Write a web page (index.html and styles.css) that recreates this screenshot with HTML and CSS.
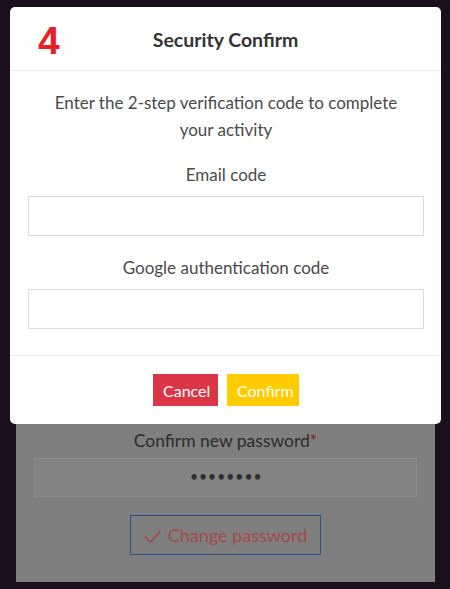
FILE: index.html
```html
<!DOCTYPE html>
<html>
<head>
<meta charset="utf-8">
<link rel="stylesheet" href="styles.css">
</head>
<body>
<div class="page">
  <div class="card">
    <div class="card-label">Confirm new password<span class="req">*</span></div>
    <div class="card-input">••••••••</div>
    <div class="card-btn">
      <svg class="check" width="18" height="16" viewBox="0 0 18 16"><path d="M1 8.5 L6.5 14 L16.5 3" fill="none" stroke="#a34a47" stroke-width="1.6"/></svg>
      <span>Change password</span>
    </div>
  </div>
</div>

<div class="modal">
  <div class="modal-header">
    <span class="step">4</span>
    <h2 class="modal-title">Security Confirm</h2>
  </div>
  <div class="modal-body">
    <p class="intro">Enter the 2-step verification code to complete your activity</p>
    <label class="field-label">Email code</label>
    <div class="field-input"></div>
    <label class="field-label">Google authentication code</label>
    <div class="field-input"></div>
  </div>
  <div class="modal-footer">
    <button class="btn btn-cancel">Cancel</button>
    <button class="btn btn-confirm">Confirm</button>
  </div>
</div>
</body>
</html>
```

FILE: styles.css
```css
html, body {
  margin: 0;
  padding: 0;
}
body {
  background: #1a0e1f;
  width: 450px;
  height: 589px;
  overflow: hidden;
  position: relative;
  font-family: Lato, "Open Sans", sans-serif;
}
.page {
  padding: 120px 15px 0 16px;
}
.card {
  background: #7f7f7f;
  height: 462px;
  display: flex;
  flex-direction: column;
  align-items: center;
  justify-content: flex-end;
  padding: 0 18px 27px;
  box-sizing: border-box;
}
.card-label {
  font-size: 17.5px;
  color: #2c2c2c;
  line-height: 24px;
}
.req {
  color: #8a1c22;
}
.card-input {
  margin-top: 5px;
  width: 100%;
  height: 39px;
  box-sizing: border-box;
  background: #838383;
  border: 1px solid #8c8c8c;
  display: flex;
  align-items: center;
  justify-content: center;
  color: #2e2e2e;
  font-size: 15px;
  font-weight: bold;
  letter-spacing: -0.5px;
  font-family: "DejaVu Sans", sans-serif;
}
.card-btn {
  margin-top: 18px;
  width: 191px;
  height: 40px;
  box-sizing: border-box;
  border: 1.5px solid #2c4f8a;
  display: flex;
  align-items: center;
  justify-content: center;
  gap: 6px;
  color: #a34a47;
  font-size: 18px;
}
.check {
  margin-top: 1px;
}
.modal {
  position: absolute;
  left: 10px;
  top: 7px;
  width: 431px;
  height: 417px;
  background: #fff;
  border-radius: 5px;
  display: flex;
  flex-direction: column;
}
.modal-header {
  height: 63px;
  border-bottom: 1px solid #ececec;
  display: flex;
  align-items: center;
  justify-content: center;
  position: relative;
}
.step {
  position: absolute;
  left: 28px;
  top: 12px;
  font-family: "Liberation Sans", Arial, sans-serif;
  font-weight: bold;
  font-size: 39px;
  color: #e8202a;
}
.modal-title {
  margin: 0;
  font-size: 19.5px;
  font-weight: 700;
  color: #333;
  padding-top: 1px;
}
.modal-body {
  padding: 18px 17px 26px 18px;
  display: flex;
  flex-direction: column;
  align-items: center;
  border-bottom: 1px solid #ececec;
}
.intro {
  margin: 0 20px;
  text-align: center;
  font-size: 17px;
  line-height: 27px;
  color: #4a4a4a;
}
.field-label {
  margin-top: 18px;
  font-size: 17px;
  line-height: 27px;
  color: #4a4a4a;
}
.field-input {
  margin-top: 8px;
  width: 100%;
  height: 40px;
  box-sizing: border-box;
  border: 1px solid #dcdcdc;
}
.modal-body .field-label:nth-of-type(2) {
  margin-top: 18px;
}
.modal-footer {
  flex: 1;
  display: flex;
  align-items: center;
  justify-content: center;
  gap: 8px;
}
.btn {
  border: none;
  height: 32px;
  padding: 0 10px;
  color: #fff;
  font-family: Lato, sans-serif;
  font-size: 16px;
  margin-left: 1px;
}
.btn-cancel {
  background: #dc3545;
  width: 65px;
}
.btn-confirm {
  background: #ffcc00;
  width: 72px;
}
```
